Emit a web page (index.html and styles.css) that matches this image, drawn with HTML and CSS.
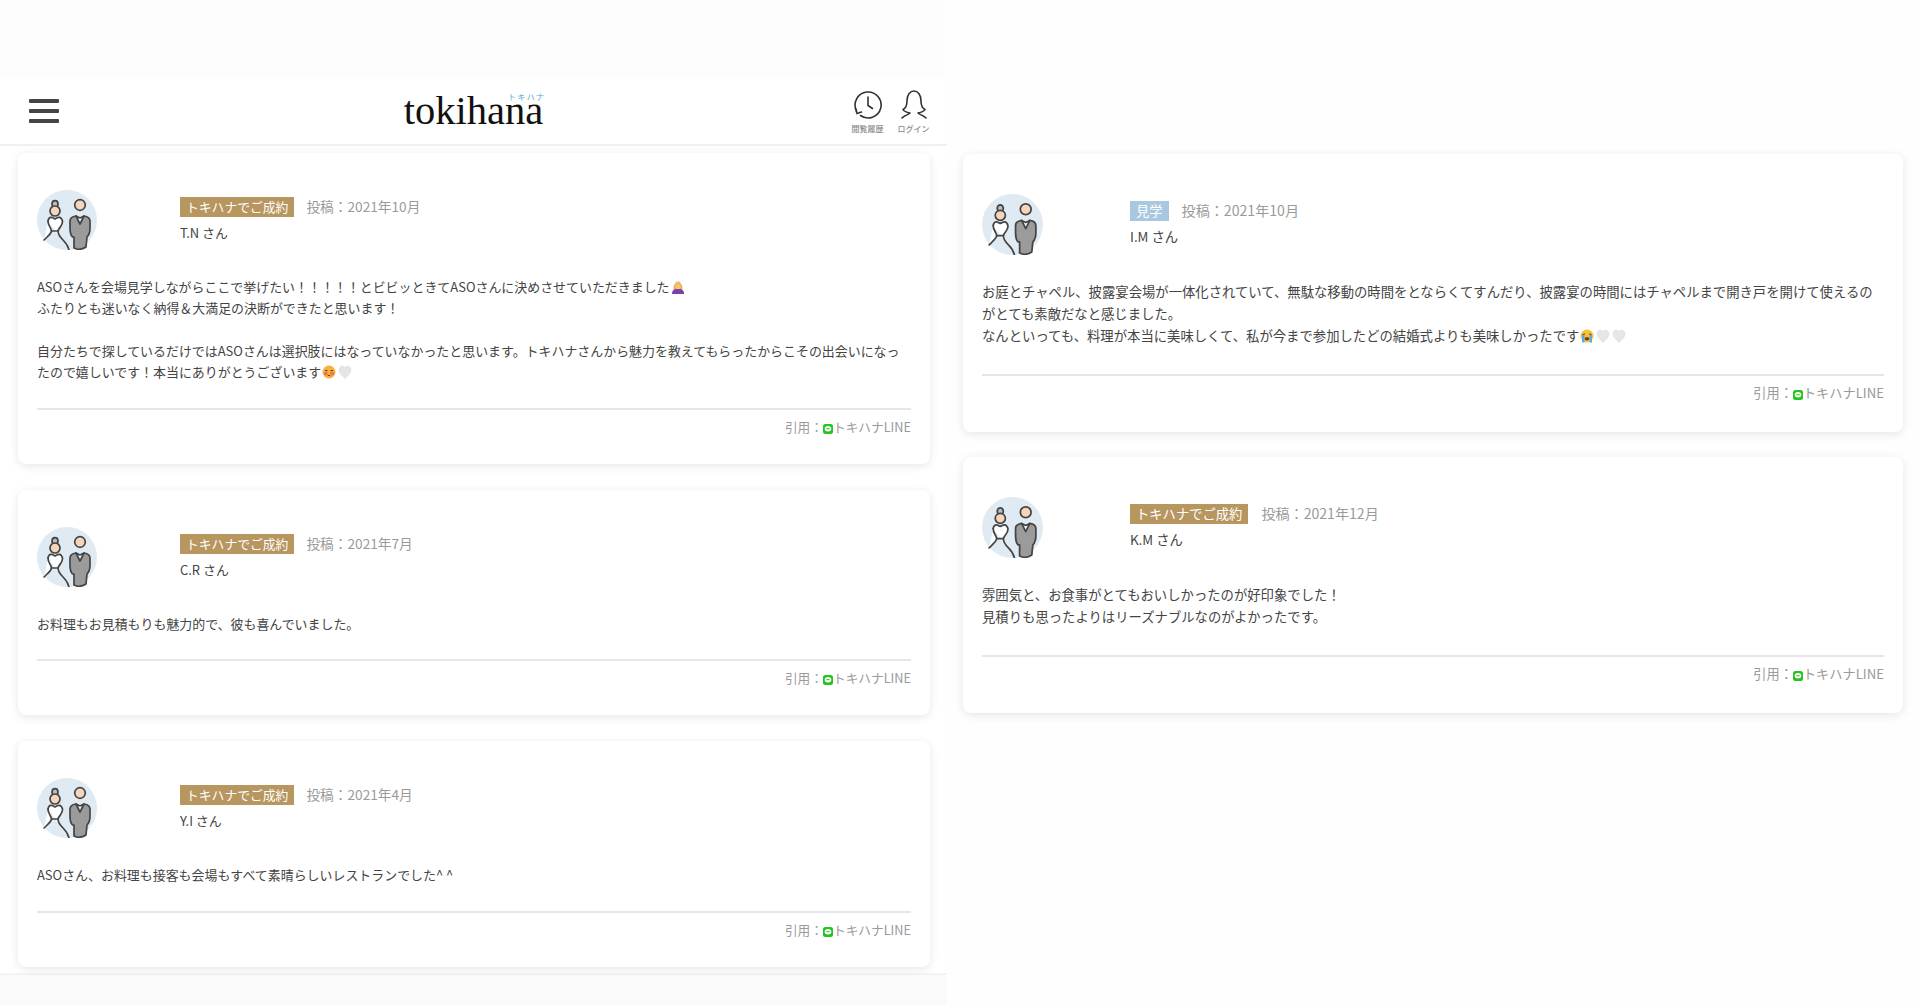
FILE: index.html
```html
<!DOCTYPE html>
<html lang="ja">
<head>
<meta charset="utf-8">
<title>tokihana</title>
<link rel="stylesheet" href="styles.css">
</head>
<body>
<svg class="defs" width="0" height="0" aria-hidden="true">
  <symbol id="avatar" viewBox="0 0 60 60">
    <circle cx="30" cy="30" r="30" fill="#dfeaf2"/>
    <g stroke="#444" stroke-width="1.700" stroke-linejoin="round" stroke-linecap="round">
      <ellipse cx="18" cy="14" rx="3" ry="3.400" fill="#bdbdbd"/>
      <path d="M11 31C12 26 15 27 18 29C21 27 24 26 25.500 31C26 36 22 37 21 41C21 44 23 47 26 50C29 53 31 56 32 60" fill="#fff"/>
      <path d="M11 31C11 36 14 37 14.500 41C14 44 10 47 7 50" fill="#fff"/>
      <path d="M14.500 41H21" fill="none"/>
      <circle cx="18" cy="21" r="5" fill="#f5d6bd"/>
      <path d="M37 58V47H35.500C33.500 45 33 42 33 38V31C33 28 36 26.500 39 26L43 31L47 26C50 26.500 53 28 53 31V38C53 42 52 45 50 47L49 57C46 59 41 60 37 58Z" fill="#9b9b9b"/>
      <path d="M39 26L43 34L47 26L43 28Z" fill="#fff"/>
      <circle cx="43" cy="15" r="5.300" fill="#f5d6bd"/>
    </g>
  </symbol>
  <symbol id="line" viewBox="0 0 10 10">
    <rect width="10" height="10" rx="2.500" fill="#22c41e"/>
    <ellipse cx="5" cy="4.800" rx="3.300" ry="2.700" fill="#fff"/>
    <rect x="3.300" y="4.200" width="3.400" height="1" fill="#22c41e"/>
  </symbol>
  <symbol id="heart" viewBox="0 0 14 14">
    <path d="M7 13.500C3 10 1 7.500 1 4.800C1 2.500 2.700 1 4.300 1C5.500 1 6.500 1.700 7 2.800C7.500 1.700 8.500 1 9.700 1C11.300 1 13 2.500 13 4.800C13 7.500 11 10 7 13.500Z" fill="#e6e6e4" stroke="#d8d8d6" stroke-width=".5"/>
  </symbol>
  <symbol id="blush" viewBox="0 0 14 14">
    <circle cx="7" cy="7" r="6.500" fill="#f7b23b"/>
    <circle cx="3.800" cy="8.500" r="2" fill="#f0705a"/>
    <circle cx="10.200" cy="8.500" r="2" fill="#f0705a"/>
    <path d="M3 5.500H5.500M8.500 5.500H11M5.800 10.500H8.200" stroke="#6b4310" stroke-width="1" fill="none"/>
  </symbol>
  <symbol id="crying" viewBox="0 0 14 14">
    <circle cx="7" cy="7" r="6.500" fill="#f7c13b"/>
    <path d="M2 6V13.500H4.500V6ZM9.500 6V13.500H12V6Z" fill="#5aa9e6"/>
    <path d="M2.500 5.500L5 5M9 5L11.500 5.500" stroke="#6b4310" stroke-width="1" fill="none"/>
    <ellipse cx="7" cy="9.800" rx="2.300" ry="1.800" fill="#7a3a1a"/>
  </symbol>
  <symbol id="princess" viewBox="0 0 14 14">
    <path d="M1 14C1 10 3.500 8.500 7 8.500C10.500 8.500 13 10 13 14Z" fill="#7d3fa8"/>
    <path d="M2.500 9C2.500 4.500 4.500 2.500 7 2.500C9.500 2.500 11.500 4.500 11.500 9Z" fill="#e8b13a"/>
    <circle cx="7" cy="6.500" r="2.800" fill="#f6c66b"/>
    <path d="M4.500 3L5 .8L6 2L7 .5L8 2L9 .8L9.500 3Z" fill="#cfcfcf"/>
  </symbol>
</svg>

<div class="page">
  <section class="column column-left">
    <div class="panel">
    <header class="site-header">
      <div class="menu" aria-label="menu"><span></span><span></span><span></span></div>
      <div class="logo">tokihana<span class="logo-kana">トキハナ</span></div>
      <nav class="header-nav">
        <div class="nav-item">
          <svg class="nav-icon" viewBox="0 0 30 30">
            <path d="M7.500 25.500A13 13 0 1 0 3.600 21" fill="none" stroke="#333" stroke-width="1.600" stroke-linecap="round"/>
            <path d="M2.500 18.500L4 23.500L8.500 22" fill="none" stroke="#333" stroke-width="1.600" stroke-linecap="round"/>
            <path d="M15 7V15.500L19.500 18.500" fill="none" stroke="#333" stroke-width="1.600" stroke-linecap="round"/>
          </svg>
          <span class="nav-label">閲覧履歴</span>
        </div>
        <div class="nav-item">
          <svg class="nav-icon" viewBox="0 0 30 30">
            <path d="M3 28C5 25.500 9 25 11 23C8.500 22.500 5 21.500 4 19.500C7 18 8 15 8 11C8 5 11 1 15 1C19 1 22 5 22 11C22 15 23 18 26 19.500C25 21.500 21.500 22.500 19 23C21 25 25 25.500 27 28" fill="none" stroke="#333" stroke-width="1.600" stroke-linecap="round" stroke-linejoin="round"/>
          </svg>
          <span class="nav-label">ログイン</span>
        </div>
      </nav>
    </header>

    <div class="card-list">
      <article class="card">
        <div class="card-head">
          <svg class="avatar"><use href="#avatar"/></svg>
          <div class="card-meta">
            <div class="meta-row"><span class="tag tag-gold">トキハナでご成約</span><span class="date">投稿：2021年10月</span></div>
            <div class="name">T.N さん</div>
          </div>
        </div>
        <div class="card-body">
          <p>ASOさんを会場見学しながらここで挙げたい！！！！！とビビッときてASOさんに決めさせていただきました<svg class="emoji"><use href="#princess"/></svg><br>ふたりとも迷いなく納得＆大満足の決断ができたと思います！<br><br>自分たちで探しているだけではASOさんは選択肢にはなっていなかったと思います。トキハナさんから魅力を教えてもらったからこその出会いになったので嬉しいです！本当にありがとうございます<svg class="emoji"><use href="#blush"/></svg><svg class="emoji"><use href="#heart"/></svg></p>
        </div>
        <div class="card-foot">引用：<svg class="line-icon"><use href="#line"/></svg>トキハナLINE</div>
      </article>

      <article class="card">
        <div class="card-head">
          <svg class="avatar"><use href="#avatar"/></svg>
          <div class="card-meta">
            <div class="meta-row"><span class="tag tag-gold">トキハナでご成約</span><span class="date">投稿：2021年7月</span></div>
            <div class="name">C.R さん</div>
          </div>
        </div>
        <div class="card-body">
          <p>お料理もお見積もりも魅力的で、彼も喜んでいました。</p>
        </div>
        <div class="card-foot">引用：<svg class="line-icon"><use href="#line"/></svg>トキハナLINE</div>
      </article>

      <article class="card">
        <div class="card-head">
          <svg class="avatar"><use href="#avatar"/></svg>
          <div class="card-meta">
            <div class="meta-row"><span class="tag tag-gold">トキハナでご成約</span><span class="date">投稿：2021年4月</span></div>
            <div class="name">Y.I さん</div>
          </div>
        </div>
        <div class="card-body">
          <p>ASOさん、お料理も接客も会場もすべて素晴らしいレストランでした^ ^</p>
        </div>
        <div class="card-foot">引用：<svg class="line-icon"><use href="#line"/></svg>トキハナLINE</div>
      </article>
    </div>
    </div>
  </section>

  <section class="column column-right">
    <article class="card">
      <div class="card-head">
        <svg class="avatar"><use href="#avatar"/></svg>
        <div class="card-meta">
          <div class="meta-row"><span class="tag tag-blue">見学</span><span class="date">投稿：2021年10月</span></div>
          <div class="name">I.M さん</div>
        </div>
      </div>
      <div class="card-body">
        <p>お庭とチャペル、披露宴会場が一体化されていて、無駄な移動の時間をとならくてすんだり、披露宴の時間にはチャペルまで開き戸を開けて使えるのがとても素敵だなと感じました。<br>なんといっても、料理が本当に美味しくて、私が今まで参加したどの結婚式よりも美味しかったです<svg class="emoji"><use href="#crying"/></svg><svg class="emoji"><use href="#heart"/></svg><svg class="emoji"><use href="#heart"/></svg></p>
      </div>
      <div class="card-foot">引用：<svg class="line-icon"><use href="#line"/></svg>トキハナLINE</div>
    </article>

    <article class="card">
      <div class="card-head">
        <svg class="avatar"><use href="#avatar"/></svg>
        <div class="card-meta">
          <div class="meta-row"><span class="tag tag-gold">トキハナでご成約</span><span class="date">投稿：2021年12月</span></div>
          <div class="name">K.M さん</div>
        </div>
      </div>
      <div class="card-body">
        <p>雰囲気と、お食事がとてもおいしかったのが好印象でした！<br>見積りも思ったよりはリーズナブルなのがよかったです。</p>
      </div>
      <div class="card-foot">引用：<svg class="line-icon"><use href="#line"/></svg>トキハナLINE</div>
    </article>
  </section>
</div>
</body>
</html>
```

FILE: styles.css
```css
* { box-sizing: border-box; }

html, body { margin: 0; padding: 0; height: 100%; }

body {
  background: #fefefe;
  color: #444;
  font-family: "Noto Sans CJK JP", "Liberation Sans", sans-serif;
  font-size: 13px;
  overflow: hidden;
}

.defs { position: absolute; }

.page {
  display: flex;
  align-items: flex-start;
  height: 1005px;
}

/* columns: the two screenshots in the reference sit at slightly different scales */
.column-left {
  --pad-top: 37px;
  --avatar: 60px;
  --head-col: 143px;
  --body-top: 25.500px;
  --body-bottom: 25.500px;
  --line: 21.400px;
  --foot: 54px;
  --text: 12.950px;
  --tag: 12.800px;
  --date: 13.700px;
  --foot-text: 12.700px;
  --meta-gap: 12px;
  --text-inset: 6px;
  width: 947px;
  flex: none;
  padding-top: 78px;
  background: #fdfdfd;
}

.column-left::after {
  content: "";
  display: block;
  height: 30px;
  background: #fafafa;
}

.panel {
  height: 897px;
  background: #fff;
  border-bottom: 2px solid #f4f4f4;
}

.column-right {
  --pad-top: 39.500px;
  --avatar: 61px;
  --head-col: 148px;
  --body-top: 26.500px;
  --body-bottom: 27px;
  --line: 22px;
  --foot: 55.500px;
  --text: 13.350px;
  --tag: 13.300px;
  --date: 14.100px;
  --foot-text: 13.200px;
  --meta-gap: 13px;
  --text-inset: 0px;
  flex: 1;
  display: flex;
  flex-direction: column;
  gap: 25.500px;
  padding: 154px 17px 0 16px;
}

/* header */
.site-header {
  height: 68px;
  display: grid;
  grid-template-columns: 1fr auto 1fr;
  align-items: center;
  padding: 0 19px;
  border-bottom: 2px solid #f0f0f0;
}

.menu {
  display: flex;
  flex-direction: column;
  gap: 5.500px;
  width: 30px;
  margin-left: 10px;
}

.menu span {
  display: block;
  height: 4.500px;
  background: #444;
  border-radius: 1px;
}

.logo {
  position: relative;
  font-family: "Liberation Serif", serif;
  font-size: 40.500px;
  line-height: 1;
  color: #111;
  margin-top: 1px;
}

.logo-kana {
  position: absolute;
  right: -2px;
  top: 2px;
  font-family: "Noto Sans CJK JP", sans-serif;
  font-size: 8px;
  line-height: 1;
  letter-spacing: 1.300px;
  color: #4fa9d6;
}

.header-nav {
  display: flex;
  justify-content: flex-end;
  gap: 14px;
  margin: 2px -1.500px 0 0;
}

.nav-item {
  display: flex;
  flex-direction: column;
  align-items: center;
  width: 32px;
}

.nav-icon { width: 30px; height: 30px; }

.nav-label {
  font-size: 8px;
  font-weight: 500;
  line-height: 10px;
  margin-top: 4px;
  color: #8a8a8a;
  white-space: nowrap;
}

/* cards */
.card-list {
  display: flex;
  flex-direction: column;
  gap: 26px;
  padding: 7px 17px 0 18px;
}

.card {
  background: #fff;
  border-radius: 8px;
  box-shadow: 0 2px 10px rgba(0, 0, 0, .1);
  padding: var(--pad-top) 19px 0;
}

.card-head {
  display: grid;
  grid-template-columns: var(--head-col) 1fr;
  height: var(--avatar);
}

.avatar {
  display: block;
  width: var(--avatar);
  height: var(--avatar);
}

.card-meta { padding-top: 7px; }

.meta-row {
  display: flex;
  align-items: center;
  gap: var(--meta-gap);
  height: 20px;
}

.tag {
  display: block;
  height: 20px;
  padding: 0 6px;
  font-size: var(--tag);
  line-height: 20px;
  color: #fff;
}

.tag-gold { background: #b89660; }
.tag-blue { background: #a9c8df; }

.date {
  font-size: var(--date);
  line-height: 20px;
  color: #9a9a9a;
  margin-top: -2px;
}

.name {
  margin-top: 6px;
  font-size: var(--text);
  line-height: 20px;
  color: #444;
}

.card-body {
  margin-top: var(--body-top);
  padding-bottom: var(--body-bottom);
  border-bottom: 2px solid #e3e7ec;
}

.card-body p {
  margin: 0;
  padding-right: var(--text-inset);
  font-size: var(--text);
  line-height: var(--line);
  color: #444;
}

.emoji {
  display: inline-block;
  width: 14px;
  height: 14px;
  margin: 0 1px;
  vertical-align: -2px;
}

.card-foot {
  height: var(--foot);
  padding-top: 7px;
  text-align: right;
  font-size: var(--foot-text);
  line-height: 20px;
  color: #9a9a9a;
}

.line-icon {
  display: inline-block;
  width: 10px;
  height: 10px;
  vertical-align: -2px;
}
```
